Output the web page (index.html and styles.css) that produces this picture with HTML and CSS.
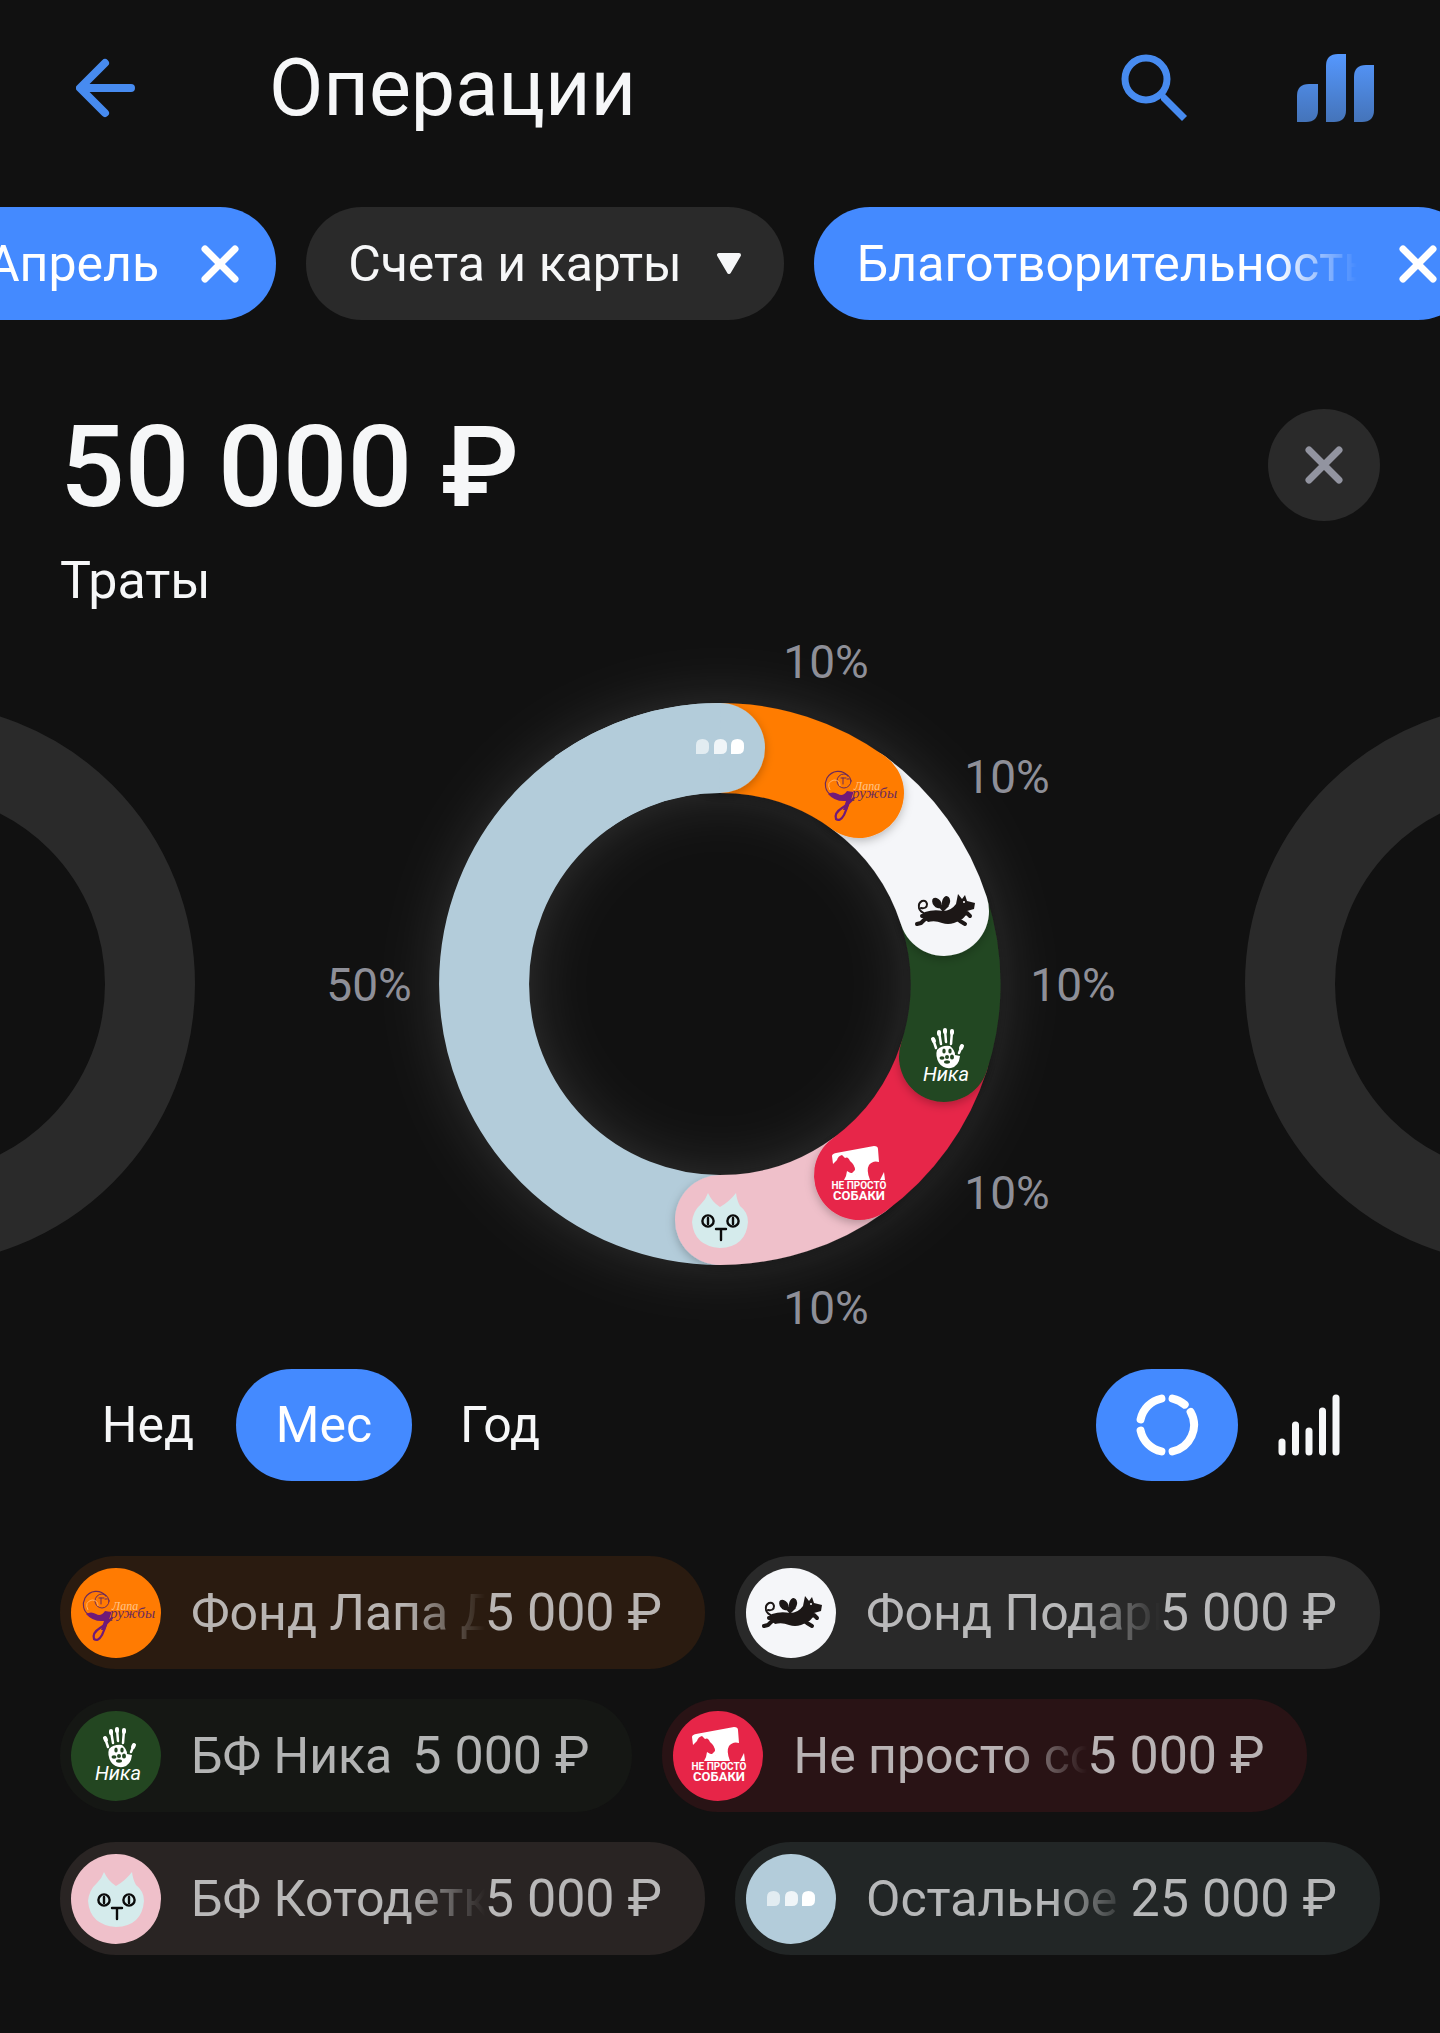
FILE: index.html
```html
<!DOCTYPE html>
<html lang="ru">

<head>
  <meta charset="UTF-8">
  <meta name="viewport" content="width=device-width, initial-scale=1">
  <title>Операции</title>
  <link rel="stylesheet" href="styles.css">
</head>

<body>
  <!-- иконки и логотипы -->
  <svg class="sprite" aria-hidden="true">
    <symbol id="cross" viewBox="0 0 38 38">
      <path d="M4 4L34 34M34 4L4 34" fill="none" stroke="currentColor" stroke-width="7" stroke-linecap="round" />
    </symbol>
    <symbol id="logo-lapa" viewBox="0 0 90 90">
      <g fill="none" stroke="#6b2a5c" stroke-linecap="round">
        <path d="M35 28C29 21 19 22 14 30C11 36 12 43 18 47" stroke-width="1.2" />
        <circle cx="31" cy="33" r="7" stroke-width="1" />
        <path d="M28 30h5M30 30v6M34 31q3-1 4 1" stroke-width="1" />
        <path d="M39 45Q35 58 31 67Q27 74 23 71Q21 65 29 60Q36 56 41 50" stroke="#701a78" stroke-width="2.2" />
      </g>
      <path d="M17 42Q13 34 21 32Q27 32 27 38" fill="none" stroke="#ffb26a" />
      <path d="M15 46Q20 43 25 46Q30 49 34 43L40 44L34 62L30 62L33 53Q22 54 15 46Z" fill="#701a78" />
      <text x="41" y="42" font-size="12" fill="#ffc488" class="script">Лапа</text>
      <text x="39" y="50" font-size="15" fill="#6b2a5c" class="script">ружбы</text>
    </symbol>
    <symbol id="logo-dog" viewBox="0 0 90 90">
      <g fill="none" stroke="#1c1716" stroke-linecap="round" stroke-linejoin="round">
        <path d="M22 42Q28 43 28 38Q27 34 23 35Q19 37 20 42Q21 46 27 48" stroke-width="2" />
        <path d="M30 51L25 54L22 57L18 58M29 49L23 50" stroke-width="4" />
        <path d="M57 52L61 55L66 58M60 50L68 47L71 50" stroke-width="4" />
      </g>
      <g fill="#1c1716">
        <path d="M26 46Q35 43 44 45Q52 45 57 38L59 28L63 33L66 29L68 35L76 37L75 43L68 45Q66 53 61 54Q52 60 43 57Q36 54 29 56Q24 52 26 46Z" />
        <ellipse cx="38" cy="37" rx="4" ry="6" transform="rotate(-38 38 37)" />
        <ellipse cx="47" cy="36" rx="4" ry="6" transform="rotate(12 47 36)" />
        <path d="M38 39L44 46L50 40L44 39Z" />
      </g>
      <circle cx="65" cy="36" r="1" fill="#fff" />
    </symbol>
    <symbol id="logo-nika" viewBox="0 0 90 90">
      <g fill="none" stroke="#fff" stroke-linecap="round">
        <path d="M34 27L37 36M40 20L42 32M46 18L47 30M53 19L52 32M63 34L60 41" stroke-width="2.500" />
        <path d="M34 27L35 29M40 20V22M46 18V20M53 19V21M63 34L62 36" stroke-width="4" />
      </g>
      <path d="M38 38Q43 33 51 34Q56 38 56 43L61 44Q60 54 52 56Q44 57 40 51Q36 44 38 38Z" fill="#fff" />
      <g fill="#234621">
        <circle cx="48" cy="45" r="2" />
        <ellipse cx="45" cy="39" rx="1.700" ry="2.500" />
        <ellipse cx="51" cy="39" rx="1.700" ry="2.500" />
        <ellipse cx="43" cy="46" rx="2.500" ry="1.700" />
        <ellipse cx="53" cy="45" rx="2" ry="2.500" />
        <ellipse cx="48" cy="50" rx="3" ry="1.700" />
      </g>
      <text x="24" y="69" font-size="20" fill="#fff" class="hand">Ника</text>
    </symbol>
    <symbol id="logo-sobaki" viewBox="0 0 90 90">
      <path d="M20 34L19 26Q19 24 23 23L61 16Q65 16 65 19L66 32Q60 30 56 35Q53 40 57 50H45L42 44L36 46L42 40Q42 35 37 31Q35 26 32 28L29 25Q25 26 24 30Z" fill="#fff" />
      <path d="M34 41Q38 44 42 43L46 50H31L33 46ZM67 50L71 42L72 50Z" fill="#fff" />
      <text x="46" y="59" font-size="10" fill="#fff" class="mark">НЕ ПРОСТО</text>
      <text x="46" y="70" font-size="13" fill="#fff" class="mark">СОБАКИ</text>
    </symbol>
    <symbol id="logo-cat" viewBox="0 0 90 90">
      <path d="M33 18Q37 27 45 32Q54 27 61 18Q62 26 65 31Q73 37 73 47Q71 72 45 73Q19 71 17 47Q18 36 26 29Q31 24 33 18Z" fill="#d5ebec" />
      <g fill="none" stroke="#0b0b0b" stroke-width="2.400" stroke-linecap="round">
        <circle cx="33" cy="46" r="5.600" />
        <circle cx="58" cy="46" r="5.600" />
        <path d="M33 43V49M58 43V49M41 54H51M46 54V65" />
      </g>
    </symbol>
    <symbol id="logo-more" viewBox="0 0 90 90">
      <g fill="#fff">
        <path d="M21 52V43Q21 37 27.500 37Q34 37 34 43.500V46Q34 52 28 52Z" opacity=".62" />
        <path d="M39 52V43Q39 37 45.500 37Q52 37 52 43.500V46Q52 52 46 52Z" opacity=".8" />
        <path d="M56 52V43Q56 37 62.500 37Q69 37 69 43.500V46Q69 52 63 52Z" />
      </g>
    </symbol>
  </svg>

  <header class="header">
    <button class="icon-btn back" type="button" aria-label="Назад">
      <svg width="60" height="60" viewBox="0 0 60 60" fill="none" stroke="#478bf0" stroke-width="8" stroke-linecap="round" stroke-linejoin="round">
        <path d="M29 5L4 30L29 55M5 30H55" />
      </svg>
    </button>
    <h1 class="title">Операции</h1>
    <button class="icon-btn" type="button" aria-label="Поиск">
      <svg width="70" height="70" viewBox="0 0 70 70" fill="none" stroke="#478bf0">
        <circle cx="27" cy="26" r="21" stroke-width="7" />
        <path d="M42 41L46 41L68 63L63 68L42 47Z" fill="#478bf0" stroke="none" />
      </svg>
    </button>
    <button class="icon-btn" type="button" aria-label="Аналитика">
      <svg width="78" height="70" viewBox="0 0 78 70">
        <defs>
          <linearGradient id="bars" gradientUnits="userSpaceOnUse" x1="0" y1="0" x2="0" y2="70">
            <stop offset="0" stop-color="#5598ff" />
            <stop offset="1" stop-color="#4473b8" />
          </linearGradient>
        </defs>
        <g fill="url(#bars)">
          <path d="M0 69V43Q0 31 12 31H21V57Q21 69 9 69Z" />
          <path d="M29 69V13Q29 1 41 1H49V57Q49 69 37 69Z" />
          <path d="M57 69V24Q57 12 69 12H77V57Q77 69 65 69Z" />
        </g>
      </svg>
    </button>
  </header>

  <div class="filters">
    <button class="chip active" type="button">
      <span>Апрель</span>
      <svg class="cross"><use href="#cross" /></svg>
    </button>
    <button class="chip" type="button">
      <span>Счета и карты</span>
      <svg width="26" height="22" viewBox="0 0 26 22"><path d="M3 2H23L13 19Z" fill="#f6f7f8" stroke="#f6f7f8" stroke-width="4" stroke-linejoin="round" /></svg>
    </button>
    <button class="chip active category" type="button">
      <span class="fade">Благотворительность</span>
      <svg class="cross"><use href="#cross" /></svg>
    </button>
  </div>

  <main>
    <section class="summary">
      <div>
        <p class="total">50 000 ₽</p>
        <p class="caption">Траты</p>
      </div>
      <button class="close" type="button" aria-label="Закрыть">
        <svg class="cross"><use href="#cross" /></svg>
      </button>
    </section>

    <svg class="chart" viewBox="0 0 1440 710" role="img" aria-label="Траты по организациям">
      <defs>
        <filter id="glow" filterUnits="userSpaceOnUse" x="320" y="-40" width="800" height="790">
          <feGaussianBlur stdDeviation="28" />
        </filter>
        <filter id="shadow" filterUnits="userSpaceOnUse" x="420" y="50" width="600" height="610">
          <feDropShadow dx="0" dy="3" stdDeviation="5" flood-color="#000" flood-opacity=".25" />
        </filter>
      </defs>
      <!-- соседние месяцы -->
      <g class="ring" stroke="#2a2a2a">
        <circle cx="-86" cy="355" r="236" />
        <circle cx="1526" cy="355" r="236" />
      </g>
      <circle cx="720" cy="355" r="236" class="ring" stroke="#fff" stroke-opacity=".14" filter="url(#glow)" />
      <g class="ring">
        <path d="M720 591A236 236 0 0 1 720 119" stroke="#b3ccda" />
        <g stroke-linecap="round">
          <path d="M859 546A236 236 0 0 1 720 591" stroke="#efc0ca" filter="url(#shadow)" />
          <path d="M944 428A236 236 0 0 1 859 546" stroke="#e72548" filter="url(#shadow)" />
          <path d="M944 282A236 236 0 0 1 944 428" stroke="#234621" filter="url(#shadow)" />
          <path d="M859 164A236 236 0 0 1 944 282" stroke="#f5f6f9" filter="url(#shadow)" />
          <path d="M720 119A236 236 0 0 1 859 164" stroke="#ff7b02" filter="url(#shadow)" />
        </g>
      </g>
      <circle cx="720" cy="119" r="45" fill="#b3ccda" filter="url(#shadow)" />
      <path d="M581 164A236 236 0 0 1 720 119" class="ring" stroke="#b3ccda" />
      <use href="#logo-more" x="675" y="73" width="90" height="90" />
      <use href="#logo-lapa" x="813" y="119" width="90" height="90" />
      <use href="#logo-dog" x="899" y="237" width="90" height="90" />
      <use href="#logo-nika" x="899" y="383" width="90" height="90" />
      <use href="#logo-sobaki" x="813" y="501" width="90" height="90" />
      <use href="#logo-cat" x="675" y="546" width="90" height="90" />
      <g class="percent">
        <text x="826" y="49">10%</text>
        <text x="1007" y="164">10%</text>
        <text x="1073" y="372">10%</text>
        <text x="1007" y="580">10%</text>
        <text x="826" y="695">10%</text>
        <text x="369" y="372">50%</text>
      </g>
    </svg>

    <div class="controls">
      <div class="tabs">
        <button type="button">Нед</button>
        <button class="current" type="button">Мес</button>
        <button type="button">Год</button>
      </div>
      <div class="views">
        <button class="current" type="button" aria-label="Диаграмма">
          <svg width="64" height="64" viewBox="0 0 64 64" fill="none" stroke="#fff" stroke-width="8" stroke-linecap="round">
            <path d="M37.600 5.600A27 27 0 0 1 49.700 11.600M55.600 18.900A27 27 0 0 1 37.600 58.400M26.400 58.400A27 27 0 0 1 5.600 37.600M5.600 26.400A27 27 0 0 1 26.400 5.600" />
          </svg>
        </button>
        <button type="button" aria-label="Столбцы">
          <svg width="62" height="62" viewBox="0 0 62 62" fill="none" stroke="#f6f7f8" stroke-width="7" stroke-linecap="round">
            <path d="M4 48V58M17.500 31V58M31 37V58M44.500 17V58M58 4V58" />
          </svg>
        </button>
      </div>
    </div>

    <ul class="legend">
      <li class="item lapa">
        <svg class="logo"><use href="#logo-lapa" /></svg>
        <span class="name fade">Фонд Лапа Дружбы</span>
        <span class="sum">5 000 ₽</span>
      </li>
      <li class="item dog">
        <svg class="logo"><use href="#logo-dog" /></svg>
        <span class="name fade">Фонд Подари</span>
        <span class="sum">5 000 ₽</span>
      </li>
      <li class="item nika">
        <svg class="logo"><use href="#logo-nika" /></svg>
        <span class="name">БФ Ника</span>
        <span class="sum">5 000 ₽</span>
      </li>
      <li class="item sobaki">
        <svg class="logo"><use href="#logo-sobaki" /></svg>
        <span class="name fade">Не просто собаки</span>
        <span class="sum">5 000 ₽</span>
      </li>
      <li class="item cat">
        <svg class="logo"><use href="#logo-cat" /></svg>
        <span class="name fade">БФ Котодетки</span>
        <span class="sum">5 000 ₽</span>
      </li>
      <li class="item more">
        <svg class="logo"><use href="#logo-more" /></svg>
        <span class="name fade">Остальное</span>
        <span class="sum">25 000 ₽</span>
      </li>
    </ul>
  </main>
</body>

</html>
```
FILE: styles.css
```css
* {
  margin: 0;
  padding: 0;
  box-sizing: border-box;
}

body {
  background-color: #111;
  color: #f6f7f8;
  font-family: Roboto, "Noto Sans", sans-serif;
  font-size: 50px;
  overflow-x: hidden;
}

button {
  border: none;
  background: none;
  color: inherit;
  font: inherit;
  cursor: pointer;
}

svg {
  display: block;
  flex: none;
}

ul {
  list-style: none;
}

.sprite {
  position: absolute;
  width: 0;
  height: 0;
}

/* шапка */
.header {
  display: flex;
  align-items: center;
  height: 175px;
  margin-bottom: 32px;
  padding: 0 65px 0 76px;
}

.back {
  margin-right: 133px;
}

.title {
  flex: 1;
  font-size: 79px;
  font-weight: 400;
  line-height: 92px;
}

.icon-btn + .icon-btn {
  margin-left: 108px;
}

/* фильтры */
.filters {
  display: flex;
  gap: 30px;
  margin-left: -56px;
}

.chip {
  display: flex;
  flex: none;
  align-items: center;
  justify-content: space-between;
  gap: 34px;
  height: 113px;
  padding: 0 42px;
  border-radius: 56px;
  background-color: #2a2a2a;
  white-space: nowrap;
}

.chip.active {
  gap: 42px;
  padding: 0 37px 0 43px;
  background-color: #448aff;
  color: #fff;
}

.cross {
  width: 38px;
  height: 38px;
}

.chip.category {
  width: 660px;
}

.category .fade {
  flex: 1;
}

.fade {
  overflow: hidden;
  -webkit-mask-image: linear-gradient(to left, transparent, #000 80px);
  mask-image: linear-gradient(to left, transparent, #000 80px);
}

/* сумма */
.summary {
  display: flex;
  align-items: flex-start;
  justify-content: space-between;
  padding: 89px 60px 16px;
}

.total {
  padding-top: 2px;
  font-size: 114px;
  font-weight: 500;
  line-height: 112px;
}

.caption {
  margin-top: 26px;
  font-size: 52px;
  line-height: 64px;
}

.close {
  display: flex;
  align-items: center;
  justify-content: center;
  width: 112px;
  height: 112px;
  border-radius: 50%;
  background-color: #2a2a2a;
  color: #9294a0;
}

/* диаграмма */
.chart {
  width: 100%;
  height: auto;
}

.ring {
  fill: none;
  stroke-width: 90px;
}

.percent {
  fill: #8e8f98;
  font-size: 46px;
  text-anchor: middle;
}

.script {
  font-family: "Liberation Serif", serif;
  font-style: italic;
}

.hand {
  font-style: italic;
}

.mark {
  font-weight: 700;
  text-anchor: middle;
}

/* переключатели */
.controls {
  display: flex;
  justify-content: space-between;
  padding: 30px 60px 75px;
}

.tabs,
.views {
  display: flex;
}

.tabs button {
  width: 176px;
  height: 112px;
  border-radius: 56px;
}

.views button {
  display: flex;
  align-items: center;
  justify-content: center;
  width: 142px;
  height: 112px;
  border-radius: 56px;
}

.controls .current {
  background-color: #448aff;
  color: #fff;
}

/* список организаций */
.legend {
  display: flex;
  flex-wrap: wrap;
  gap: 30px;
  padding: 0 60px 79px;
}

.item {
  display: flex;
  align-items: center;
  width: calc(50% - 15px);
  height: 113px;
  padding: 0 43px 0 11px;
  border-radius: 56px;
  white-space: nowrap;
}

.logo {
  width: 90px;
  height: 90px;
  margin-right: 30px;
  border-radius: 50%;
}

.name {
  flex: 1;
}

.name,
.sum {
  opacity: .7;
}

.sum {
  font-size: 52px;
}

.lapa {
  background-color: #2a1b10;
}

.lapa .logo {
  background-color: #ff7b02;
}

.dog {
  background-color: #292929;
}

.dog .logo {
  background-color: #f5f6f9;
}

.nika {
  width: auto;
  background-color: #151714;
}

.nika .logo {
  background-color: #234621;
}

.nika .name {
  padding-right: 20px;
}

.sobaki {
  background-color: #291315;
}

.sobaki .logo {
  background-color: #e72548;
}

.cat {
  background-color: #292423;
}

.cat .logo {
  background-color: #efc0ca;
}

.more {
  background-color: #222626;
}

.more .logo {
  background-color: #b3ccda;
}
```
